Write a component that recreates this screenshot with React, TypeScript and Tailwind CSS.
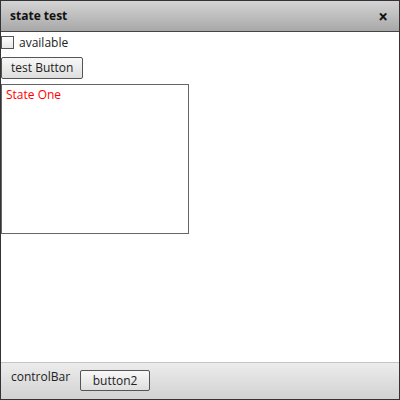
// Flex-style panel with a title bar, a small state demo and a bottom control bar.

export default function App() {
  return (
    <div
      className="w-[400px] h-[400px] flex flex-col border border-[#333] bg-white text-[12px] text-[#222]"
      style={{ fontFamily: '"Open Sans", "DejaVu Sans", sans-serif' }}
    >
      {/* title bar */}
      <div className="h-[31px] shrink-0 flex items-center justify-between pl-[9px] pr-[11px] border-b border-[#444] bg-gradient-to-b from-[#d4d4d4] to-[#a8a8a8]">
        <span className="font-bold text-[12px] text-[#111]">state test</span>
        <span className="font-bold text-[17px] text-[#111] leading-none">×</span>
      </div>

      {/* body */}
      <div className="flex-1 flex flex-col items-start pt-[3px]">
        <label className="flex items-center gap-[5px] h-[15px]">
          <span className="w-[13px] h-[13px] border border-[#555] bg-gradient-to-b from-white to-[#e6e6e6]" />
          <span>available</span>
        </label>
        <button className="mt-[7px] h-[22px] px-[9px] border border-[#555] rounded-[2px] bg-gradient-to-b from-[#f8f8f8] to-[#dedede] text-[12px] text-[#222]">
          test Button
        </button>
        <div className="mt-[5px] w-[188px] h-[150px] border border-[#666] px-[4px] pt-[1px]">
          <span className="text-[#f00]">State One</span>
        </div>
      </div>

      {/* control bar */}
      <div className="h-[37px] shrink-0 flex items-start gap-[10px] pl-[10px] pt-[5px] border-t border-[#c4c4c4] bg-gradient-to-b from-[#ececec] to-[#d2d2d2]">
        <span>controlBar</span>
        <button className="mt-[2px] w-[70px] h-[21px] border border-[#555] rounded-[2px] bg-gradient-to-b from-[#f8f8f8] to-[#dedede] text-[12px] text-[#222]">
          button2
        </button>
      </div>
    </div>
  );
}
